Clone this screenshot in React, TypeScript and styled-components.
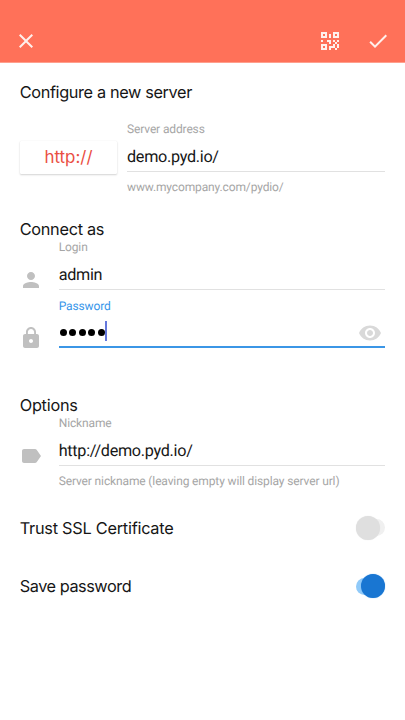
import React from "react";
import styled, { createGlobalStyle } from "styled-components";

const GlobalStyle = createGlobalStyle`
  *, *::before, *::after { box-sizing: border-box; }
  body { margin: 0; background: #fff; color: #161616; font-family: Roboto, sans-serif; text-rendering: geometricPrecision; }
`;

const Screen = styled.div`
  display: flex;
  flex-direction: column;
  height: 720px;
  background: #fff;
`;

const Toolbar = styled.header`
  display: flex;
  align-items: flex-end;
  flex: none;
  height: 63px;
  padding: 0 15px 9px 14px;
  background: #ff7159;
  border-bottom: 1px solid #ff9f8d;
`;

const Spacer = styled.div`
  flex: 1;
`;

const IconButton = styled.button<{ $gap?: number }>`
  display: flex;
  width: 24px;
  height: 24px;
  margin: 0 0 0 ${(p) => p.$gap ?? 0}px;
  padding: 0;
  border: 0;
  background: none;
  color: ${(p) => p.color ?? "#fff0ec"};
`;

const Icon = styled.svg`
  display: block;
  width: 24px;
  height: 24px;
  fill: currentColor;
`;

const Form = styled.main`
  display: flex;
  flex-direction: column;
  padding: 17px 20px 0;
`;

const Heading = styled.h2<{ $tracking: number }>`
  margin: 0 0 0 -0.3px;
  height: 24px;
  font: 400 16.3px/24px Inter, sans-serif;
  letter-spacing: ${(p) => p.$tracking}px;
  white-space: nowrap;
`;

const Section = styled.section<{ $top: number }>`
  display: flex;
  flex-direction: column;
  margin-top: ${(p) => p.$top}px;
`;

const AddressRow = styled.div`
  display: flex;
  gap: 10px;
  margin-top: 18px;
`;

const SchemeButton = styled.button`
  flex: none;
  width: 97px;
  height: 33px;
  margin: 19px 0 0;
  padding: 0;
  border: 0;
  border-radius: 1px;
  background: #fff;
  box-shadow: 0 1px 2px rgba(0, 0, 0, 0.17), 0 0 1px rgba(0, 0, 0, 0.1);
  color: #ea4e43;
  font: 400 16.9px/33px Inter, sans-serif;
`;

const FieldRow = styled.div<{ $top?: number }>`
  display: flex;
  gap: 16px;
  height: 58.5px;
  margin-top: ${(p) => p.$top ?? 0}px;
`;

const FieldIcon = styled.span<{ $top: number }>`
  flex: none;
  height: 24px;
  margin-top: ${(p) => p.$top}px;
  margin-left: -0.7px;
  margin-right: -0.6px;
  color: #c0c0c0;
`;

const FieldColumn = styled.label`
  display: flex;
  flex-direction: column;
  flex: 1;
  min-width: 0;
`;

const Caption = styled.span<{ $active?: boolean }>`
  flex: none;
  height: 14px;
  font-size: 12px;
  line-height: 14px;
  letter-spacing: -0.13px;
  white-space: nowrap;
  color: ${(p) => (p.$active ? "#3796ea" : "#a6a6a6")};
`;

const ValueLine = styled.span<{ $active?: boolean }>`
  display: flex;
  flex: none;
  align-items: center;
  height: ${(p) => (p.$active ? 35.4 : 36)}px;
  padding-top: 7px;
  border-bottom: ${(p) => (p.$active ? "2px solid #3b96e6" : "1px solid #e1e1e1")};
  font-size: 16.2px;
  letter-spacing: -0.29px;
  line-height: 24px;
  white-space: nowrap;
`;

const Hint = styled(Caption)`
  margin-top: 8px;
`;

const Bullets = styled.span`
  display: flex;
  gap: 2.5px;
  padding-left: 1px;
`;

const Bullet = styled.i`
  width: 7px;
  height: 7px;
  border-radius: 50%;
  background: #000;
`;

const Caret = styled.i`
  width: 2px;
  height: 20px;
  margin-top: -3px;
  background: #6578dc;
`;

const RevealButton = styled(IconButton)`
  margin: 0 3.3px 0 auto;
`;

const OptionRow = styled.div<{ $top: number }>`
  display: flex;
  align-items: center;
  justify-content: space-between;
  height: 26px;
  margin-top: ${(p) => p.$top}px;
`;

const Track = styled.span<{ $on?: boolean }>`
  display: flex;
  align-items: center;
  justify-content: ${(p) => (p.$on ? "flex-end" : "flex-start")};
  width: 29px;
  height: 17px;
  border-radius: 9px;
  background: ${(p) => (p.$on ? "#90caf9" : "#f0f0f0")};
`;

const Thumb = styled.span<{ $on?: boolean }>`
  flex: none;
  width: 24px;
  height: 24px;
  margin-right: ${(p) => (p.$on ? -0.4 : 0)}px;
  border-radius: 50%;
  background: ${(p) => (p.$on ? "#1976d2" : "#dfdfdf")};
  box-shadow: 0 0 1px ${(p) => (p.$on ? "#5fa5e8" : "#e0e0e0")};
`;

const paths = {
  close: "M19 6.41 17.59 5 12 10.59 6.41 5 5 6.41 10.59 12 5 17.59 6.41 19 12 13.41 17.59 19 19 17.59 13.41 12z",
  qr: "M3,11H5V13H3V11M11,5H13V9H11V5M9,11H13V15H11V13H9V11M15,11H17V13H19V11H21V13H19V15H21V19H19V21H17V19H13V21H11V17H15V15H17V13H15V11M19,19V15H17V19H19M15,3H21V9H15V3M17,5V7H19V5H17M3,3H9V9H3V3M5,5V7H7V5H5M3,15H9V21H3V15M5,17V19H7V17H5Z",
  check: "M9 16.17 4.83 12l-1.42 1.41L9 19 21 7l-1.41-1.41z",
  person: "M12 12c2.21 0 4-1.79 4-4s-1.79-4-4-4-4 1.79-4 4 1.79 4 4 4zm0 2c-2.67 0-8 1.34-8 4v2h16v-2c0-2.66-5.33-4-8-4z",
  lock: "M18 8h-1V6c0-2.76-2.24-5-5-5S7 3.24 7 6v2H6c-1.1 0-2 .9-2 2v10c0 1.1.9 2 2 2h12c1.1 0 2-.9 2-2V10c0-1.1-.9-2-2-2zm-6 9c-1.1 0-2-.9-2-2s.9-2 2-2 2 .9 2 2-.9 2-2 2zm3.1-9H8.9V6c0-1.71 1.39-3.1 3.1-3.1s3.1 1.39 3.1 3.1v2z",
  label: "M17.63 5.84C17.27 5.33 16.67 5 16 5L5 5.01C3.9 5.01 3 5.9 3 7v10c0 1.1.9 1.99 2 1.99L16 19c.67 0 1.27-.33 1.63-.84L22 12l-4.37-6.16z",
  eye: "M12 4.5C7 4.5 2.73 7.61 1 12c1.73 4.39 6 7.5 11 7.5s9.27-3.11 11-7.5c-1.73-4.39-6-7.5-11-7.5zM12 17c-2.76 0-5-2.24-5-5s2.24-5 5-5 5 2.24 5 5-2.24 5-5 5zm0-8c-1.66 0-3 1.34-3 3s1.34 3 3 3 3-1.34 3-3-1.34-3-3-3z",
};

const Glyph = ({ name }: { name: keyof typeof paths }) => (
  <Icon viewBox="0 0 24 24" aria-hidden="true">
    <path d={paths[name]} />
  </Icon>
);

export default function App() {
  return (
    <>
      <GlobalStyle />
      <Screen>
        <Toolbar>
          <IconButton aria-label="Close"><Glyph name="close" /></IconButton>
          <Spacer />
          <IconButton aria-label="Scan code"><Glyph name="qr" /></IconButton>
          <IconButton aria-label="Save" $gap={24}><Glyph name="check" /></IconButton>
        </Toolbar>

        <Form>
          <Heading $tracking={-0.36}>Configure a new server</Heading>
          <AddressRow>
            <SchemeButton>http://</SchemeButton>
            <FieldColumn>
              <Caption>Server address</Caption>
              <ValueLine>demo.pyd.io/</ValueLine>
              <Hint>www.mycompany.com/pydio/</Hint>
            </FieldColumn>
          </AddressRow>

          <Section $top={23}>
            <Heading $tracking={-0.29}>Connect as</Heading>
            <FieldRow $top={-1}>
              <FieldIcon $top={27.5}><Glyph name="person" /></FieldIcon>
              <FieldColumn>
                <Caption>Login</Caption>
                <ValueLine>admin</ValueLine>
              </FieldColumn>
            </FieldRow>
            <FieldRow>
              <FieldIcon $top={27.5}><Glyph name="lock" /></FieldIcon>
              <FieldColumn>
                <Caption $active>Password</Caption>
                <ValueLine $active>
                  <Bullets>
                    <Bullet /><Bullet /><Bullet /><Bullet /><Bullet />
                  </Bullets>
                  <Caret />
                  <RevealButton color="#d9d9d9" aria-label="Show password"><Glyph name="eye" /></RevealButton>
                </ValueLine>
              </FieldColumn>
            </FieldRow>
          </Section>

          <Section $top={36}>
            <Heading $tracking={-0.25}>Options</Heading>
            <FieldRow $top={-1}>
              <FieldIcon $top={27.5}><Glyph name="label" /></FieldIcon>
              <FieldColumn>
                <Caption>Nickname</Caption>
                <ValueLine>http://demo.pyd.io/</ValueLine>
                <Hint>Server nickname (leaving empty will display server url)</Hint>
              </FieldColumn>
            </FieldRow>
            <OptionRow $top={40}>
              <Heading as="span" $tracking={-0.24}>Trust SSL Certificate</Heading>
              <Track><Thumb /></Track>
            </OptionRow>
            <OptionRow $top={32.5}>
              <Heading as="span" $tracking={-0.45}>Save password</Heading>
              <Track $on><Thumb $on /></Track>
            </OptionRow>
          </Section>
        </Form>
      </Screen>
    </>
  );
}
